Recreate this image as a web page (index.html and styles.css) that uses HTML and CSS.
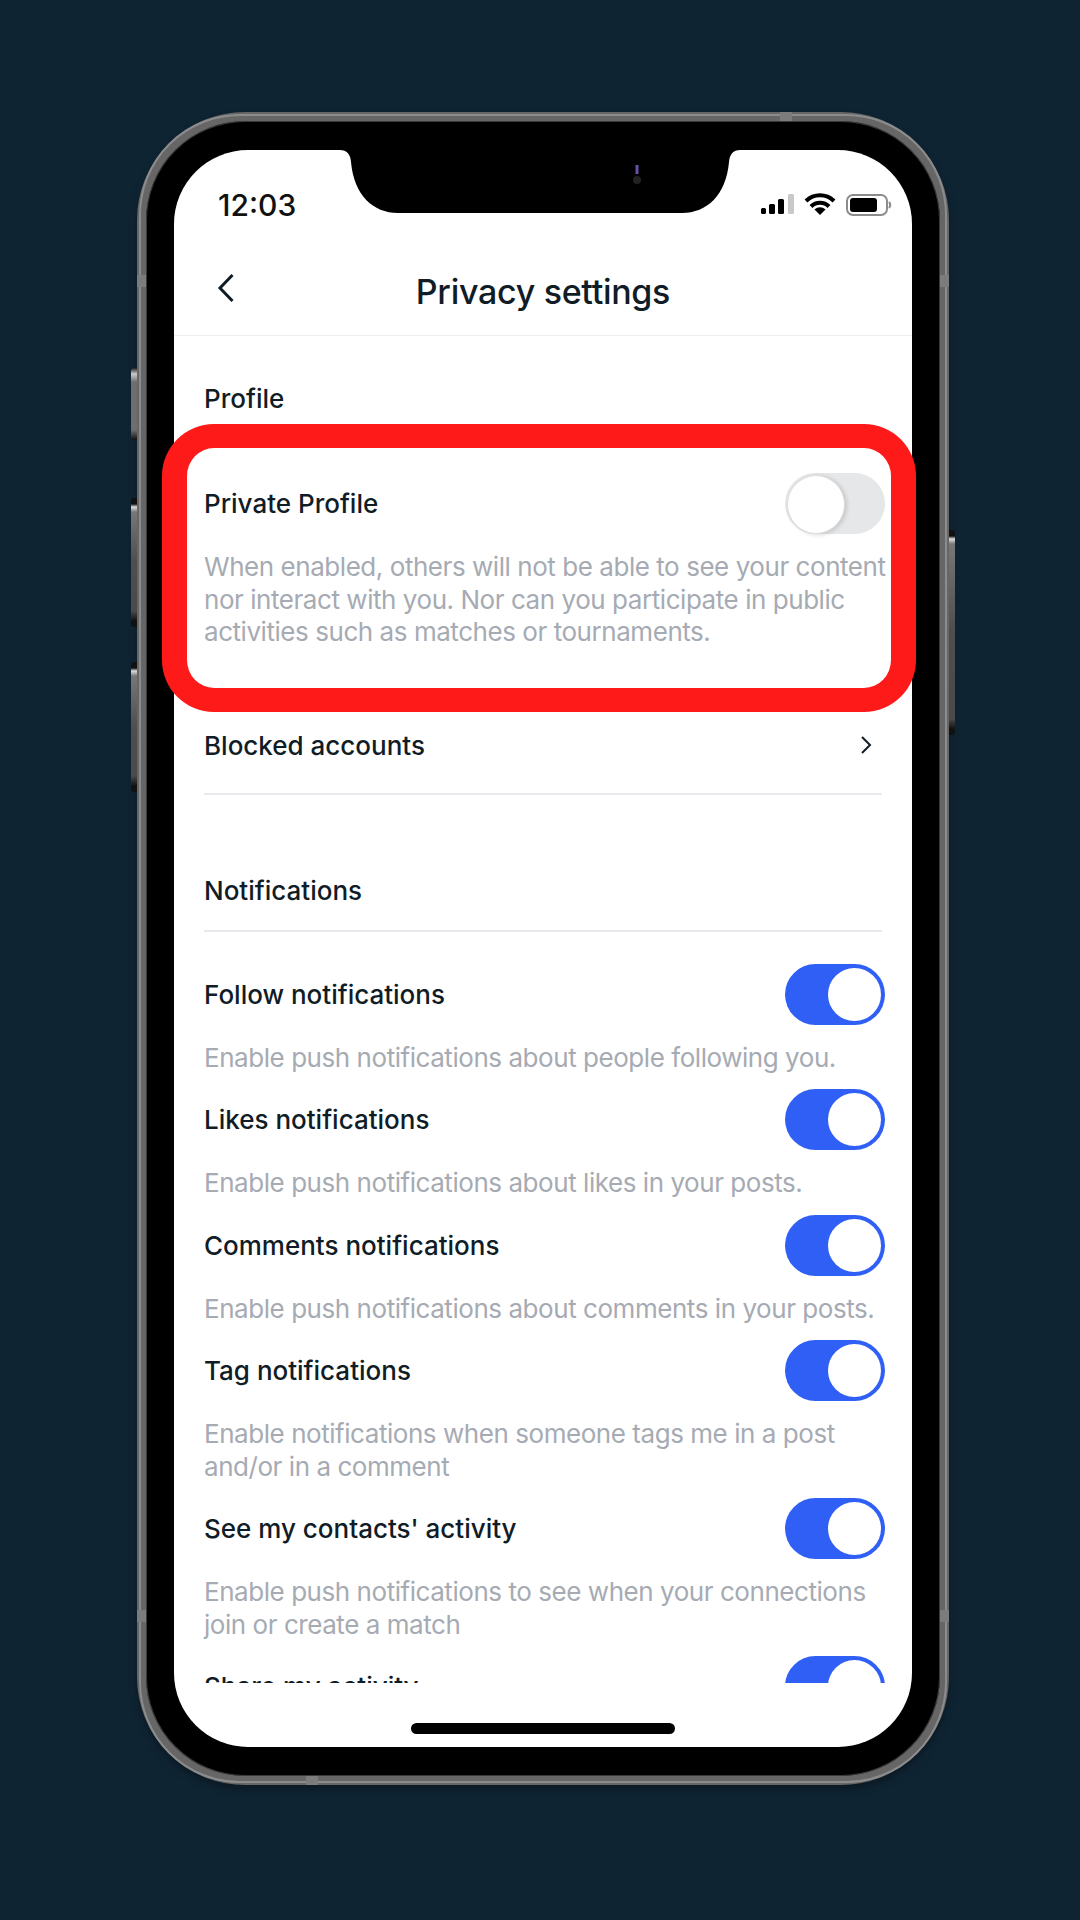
FILE: index.html

```html
<!DOCTYPE html>
<html lang="en">
<head>
  <meta charset="UTF-8" />
  <meta name="viewport" content="width=device-width, initial-scale=1.0"/>
  <title>Privacy settings</title>
  <link rel="stylesheet" href="styles.css">
</head>
<body>

<div class="phone">
  <span class="side-btn btn-mute"></span>
  <span class="side-btn btn-up"></span>
  <span class="side-btn btn-down"></span>
  <span class="side-btn btn-power"></span>
  <span class="band band-top"></span>
  <span class="band band-bottom"></span>
  <span class="band band-left-1"></span>
  <span class="band band-left-2"></span>
  <span class="band band-right-1"></span>
  <span class="band band-right-2"></span>

  <div class="screen">
    <svg class="notch" width="384" height="63" viewBox="0 0 384 63">
      <path d="M-8 0 Q2 0 3 12 C6 45 25 63 50 63 L334 63 C359 63 378 45 381 12 Q382 0 392 0 Z" fill="#000"/>
      <path d="M289 15 V24" stroke="#6a4fa8" stroke-width="3" fill="none"/>
      <circle cx="289" cy="30" r="4" fill="#222"/>
    </svg>

    <div class="status-bar">
      <span class="time">12:03</span>
      <svg width="132" height="24" viewBox="0 0 132 24">
        <rect x="1" y="15" width="5" height="6" rx="1.5" fill="#000"/>
        <rect x="9" y="11" width="6" height="10" rx="1.5" fill="#000"/>
        <rect x="18" y="6" width="6" height="15" rx="1.5" fill="#000"/>
        <rect x="28" y="1" width="6" height="20" rx="1.5" fill="#c9c9c9"/>
        <path d="M46 8 A20 20 0 0 1 74 8 M51 13.500 A12.500 12.500 0 0 1 69 13.500" fill="none" stroke="#000" stroke-width="4"/>
        <path d="M54.500 16.500 A8 8 0 0 1 65.500 16.500 L60 22 Z" fill="#000"/>
        <rect x="87" y="2" width="40" height="20" rx="6" fill="none" stroke="#8c8c8c" stroke-width="2"/>
        <rect x="90" y="5" width="27" height="14" rx="3" fill="#000"/>
        <path d="M129 9 Q131.500 12 129 15" fill="none" stroke="#8c8c8c" stroke-width="2"/>
      </svg>
    </div>

    <div class="nav-bar">
      <svg class="back" width="18" height="30" viewBox="0 0 18 30">
        <path d="M15.500 2 L3 15 L15.500 28" fill="none" stroke="#101c26" stroke-width="3"/>
      </svg>
      <h1>Privacy settings</h1>
    </div>

    <div class="content">
      <div class="section-label first">Profile</div>

      <div class="setting">
        <div class="setting-head">
          <span>Private Profile</span>
          <span class="toggle off"></span>
        </div>
        <p>When enabled, others will not be able to see your content nor interact with you. Nor can you participate in public activities such as matches or tournaments.</p>
      </div>

      <div class="link-row">
        <span>Blocked accounts</span>
        <svg width="12" height="20" viewBox="0 0 12 20">
          <path d="M2 2 L10 10 L2 18" fill="none" stroke="#101c26" stroke-width="2"/>
        </svg>
      </div>

      <div class="section-label notifications">Notifications</div>

      <div class="setting">
        <div class="setting-head">
          <span>Follow notifications</span>
          <span class="toggle"></span>
        </div>
        <p>Enable push notifications about people following you.</p>
      </div>
      <div class="setting">
        <div class="setting-head">
          <span>Likes notifications</span>
          <span class="toggle"></span>
        </div>
        <p>Enable push notifications about likes in your posts.</p>
      </div>
      <div class="setting">
        <div class="setting-head">
          <span>Comments notifications</span>
          <span class="toggle"></span>
        </div>
        <p>Enable push notifications about comments in your posts.</p>
      </div>
      <div class="setting">
        <div class="setting-head">
          <span>Tag notifications</span>
          <span class="toggle"></span>
        </div>
        <p>Enable notifications when someone tags me in a post and/or in a comment</p>
      </div>
      <div class="setting">
        <div class="setting-head">
          <span>See my contacts' activity</span>
          <span class="toggle"></span>
        </div>
        <p>Enable push notifications to see when your connections join or create a match</p>
      </div>
      <div class="setting">
        <div class="setting-head">
          <span>Share my activity</span>
          <span class="toggle"></span>
        </div>
      </div>
    </div>

    <div class="home-area">
      <div class="home-indicator"></div>
    </div>
  </div>

  <div class="highlight"></div>
</div>

</body>
</html>
```

FILE: styles.css

```css
* {
  box-sizing: border-box;
}
html, body {
  margin: 0;
  height: 1920px;
  overflow: hidden;
}
body {
  background-color: #0f2433;
  font-family: 'Inter', 'Liberation Sans', sans-serif;
  color: #101c26;
  padding: 112px 0 0 137px;
}

/* device */
.phone {
  position: relative;
  width: 812px;
  height: 1673px;
  padding: 29px 28px;
  background: #000;
  border: 9px solid #666;
  border-radius: 108px;
  box-shadow: inset 0 0 0 1px #3a3a3a, 0 5px 8px rgba(0,0,0,0.3);
}
.phone::before {
  content: "";
  position: absolute;
  inset: -7px;
  border: 2px solid #8c8c8c;
  border-radius: 101px;
}
.side-btn {
  position: absolute;
  width: 6px;
  background: linear-gradient(180deg, #111 0, #111 6px, #ddd 9px, #777 14px, #4e4e4e 50%, #4a4a4a calc(100% - 16px), #111 calc(100% - 6px));
  border-radius: 3px 0 0 3px;
}
.btn-mute {
  left: -15px;
  top: 247px;
  height: 72px;
  background: linear-gradient(180deg, #222 0, #ccc 6px, #6e6e6e 14px, #6e6e6e calc(100% - 10px), #111 100%);
}
.btn-up { left: -15px; top: 377px; height: 129px; }
.btn-down { left: -15px; top: 541px; height: 130px; }
.btn-power { left: 803px; top: 409px; height: 205px; border-radius: 0 3px 3px 0; }
.band {
  position: absolute;
  background: #7c7c7c;
}
.band-top { left: 634px; top: -9px; width: 12px; height: 9px; }
.band-bottom { left: 160px; bottom: -9px; width: 12px; height: 9px; }
.band-left-1 { left: -9px; top: 154px; width: 9px; height: 12px; }
.band-left-2 { left: -9px; top: 1489px; width: 9px; height: 12px; }
.band-right-1 { right: -9px; top: 154px; width: 9px; height: 12px; }
.band-right-2 { right: -9px; top: 1489px; width: 9px; height: 12px; }

.screen {
  position: relative;
  height: 1597px;
  background: #fff;
  border-radius: 74px;
  overflow: hidden;
  display: flex;
  flex-direction: column;
}
.notch {
  position: absolute;
  top: 0;
  left: 174px;
  overflow: visible;
}
.highlight {
  position: absolute;
  left: 16px;
  top: 303px;
  width: 754px;
  height: 288px;
  border: solid #ff1a1a;
  border-width: 24px 25px;
  border-radius: 52px;
}

/* top bars */
.status-bar {
  height: 104px;
  padding: 5px 20px 0 44px;
  display: flex;
  align-items: center;
  justify-content: space-between;
}
.time {
  font-size: 30px;
  font-weight: 500;
  color: #111;
}
.nav-bar {
  position: relative;
  height: 82px;
  padding-bottom: 6px;
  border-bottom: 1px solid #eeeff1;
  display: flex;
  align-items: center;
  justify-content: center;
}
.nav-bar h1 {
  margin: 0;
  font-size: 34px;
  font-weight: 500;
  letter-spacing: -0.3px;
}
.back {
  position: absolute;
  left: 43px;
  top: 19px;
}

/* list */
.content {
  flex: 1;
  overflow: hidden;
  padding: 43px 30px 0;
}
.section-label {
  font-size: 26px;
  font-weight: 500;
  line-height: 40px;
}
.section-label.first {
  margin-bottom: 54px;
}
.section-label.notifications {
  margin-top: 76px;
  padding-bottom: 20px;
  height: 61px;
  border-bottom: 2px solid #e8eaed;
  margin-bottom: 32px;
}
.setting {
  margin-bottom: 15px;
}
.setting-head {
  height: 61px;
  margin-right: -3px;
  display: flex;
  align-items: center;
  justify-content: space-between;
  font-size: 26px;
  font-weight: 500;
}
.setting p {
  margin: 17px -8px 0 0;
  font-size: 26px;
  line-height: 32.500px;
  letter-spacing: -0.45px;
  color: #a6abb3;
}
.link-row {
  margin-top: 73px;
  height: 73px;
  padding-bottom: 24px;
  border-bottom: 2px solid #e8eaed;
  display: flex;
  align-items: center;
  justify-content: space-between;
  font-size: 26px;
  font-weight: 500;
}
.link-row svg {
  margin-right: 10px;
}

.toggle {
  position: relative;
  flex: none;
  width: 100px;
  height: 61px;
  border-radius: 31px;
  background: #2f5ff5;
}
.toggle::after {
  content: "";
  position: absolute;
  top: 4px;
  right: 4px;
  width: 53px;
  height: 53px;
  border-radius: 50%;
  background: #fff;
}
.toggle.off {
  background: #e6e7e9;
}
.toggle.off::after {
  top: 2px;
  right: auto;
  left: 2px;
  width: 56px;
  height: 57px;
  border: 1px solid #dcdcdc;
  box-shadow: 2px 1px 4px rgba(0,0,0,0.15);
}

.home-area {
  flex: none;
  height: 64px;
  padding-top: 40px;
}
.home-indicator {
  width: 264px;
  height: 11px;
  margin: 0 auto;
  background: #000;
  border-radius: 6px;
}
```
